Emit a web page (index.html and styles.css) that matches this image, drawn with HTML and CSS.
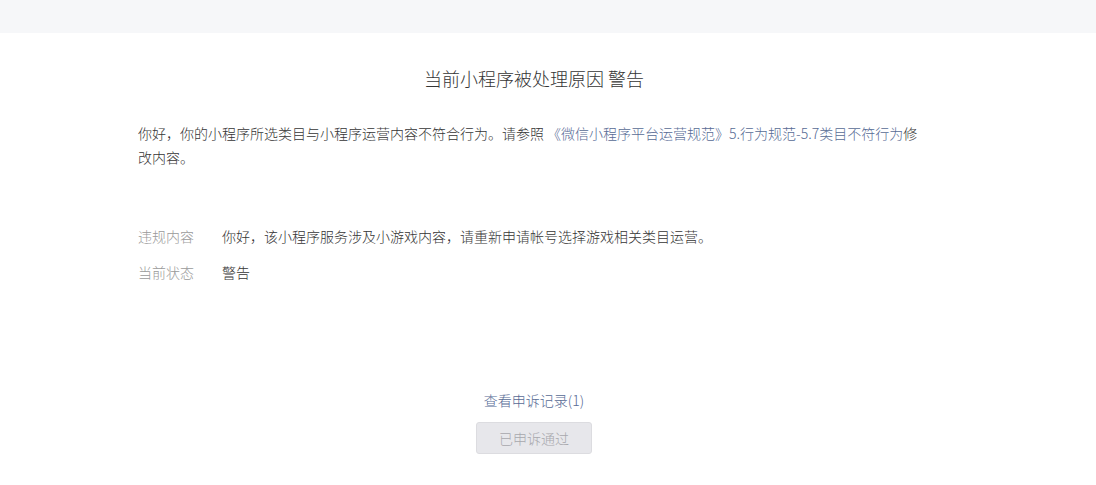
FILE: index.html
```html
<!DOCTYPE html>
<html lang="zh-CN">
<head>
<meta charset="utf-8">
<title>处理原因</title>
<link rel="stylesheet" href="styles.css">
</head>
<body>
<div class="topbar"></div>
<main class="content">
  <h1 class="title">当前小程序被处理原因 警告</h1>
  <p class="desc">你好，你的小程序所选类目与小程序运营内容不符合行为。请参照 <a class="link" href="#">《微信小程序平台运营规范》5.行为规范-5.7类目不符行为</a>修改内容。</p>
  <dl class="info">
    <div class="row"><dt>违规内容</dt><dd>你好，该小程序服务涉及小游戏内容，请重新申请帐号选择游戏相关类目运营。</dd></div>
    <div class="row"><dt>当前状态</dt><dd>警告</dd></div>
  </dl>
  <div class="actions">
    <a class="link record" href="#">查看申诉记录(1)</a>
    <button class="btn" disabled>已申诉通过</button>
  </div>
</main>
</body>
</html>
```
FILE: styles.css
```css
* { box-sizing: border-box; }
html, body { margin: 0; padding: 0; background: #fff; }
body {
  font-family: "Noto Sans CJK SC", "Microsoft YaHei", sans-serif;
  font-weight: 300;
  color: #353535;
  font-size: 14px;
  text-spacing-trim: space-all;
}
.topbar { height: 33px; background: #f6f7f9; }
.content {
  width: 792px;
  margin-left: 138px;
}
.title {
  margin: 32px 0 0;
  font-size: 18px;
  font-weight: 300;
  line-height: 26px;
  text-align: center;
  color: #353535;
}
.desc {
  margin: 30px 0 0;
  line-height: 24px;
  font-size: 14px;
}
.link { color: #576b95; text-decoration: none; }
.info { margin: 55px 0 0; }
.row { display: flex; line-height: 24px; margin-bottom: 12px; }
.row dt { width: 84px; color: #9a9a9a; flex: none; }
.row dd { margin: 0; color: #353535; }
.actions {
  margin-top: 106px;
  display: flex;
  flex-direction: column;
  align-items: center;
}
.record { font-size: 14px; line-height: 20px; }
.btn {
  margin-top: 12px;
  width: 116px;
  height: 32px;
  border: 1px solid #dcdce0;
  border-radius: 3px;
  background: #e7e7eb;
  color: #a8a8ad;
  font-family: inherit;
  font-weight: 300;
  font-size: 14px;
  padding: 0;
}
```
